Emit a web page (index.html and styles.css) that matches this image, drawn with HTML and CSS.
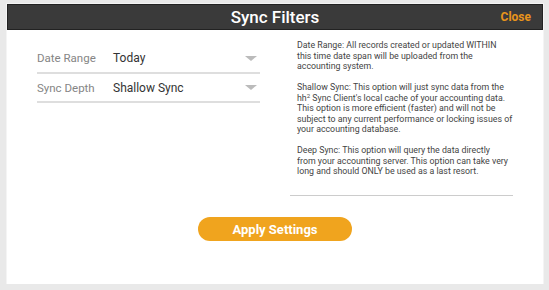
FILE: index.html
```html
<!DOCTYPE html>
<html lang="en">
<head>
    <meta charset="UTF-8">
    <meta name="viewport" content="width=device-width, initial-scale=1.0">
    <title>Sync Filters</title>
    <link rel="stylesheet" href="styles.css">
</head>
<body>
    <div class="modal">
        <div class="modal-header">
            <h1>Sync Filters</h1>
            <a href="#" class="close">Close</a>
        </div>
        <div class="modal-body">
            <div class="filters">
                <div class="form-row">
                    <label for="date-range">Date Range</label>
                    <div class="select" id="date-range">Today<span class="arrow"></span></div>
                </div>
                <div class="form-row">
                    <label for="sync-depth">Sync Depth</label>
                    <div class="select" id="sync-depth">Shallow Sync<span class="arrow"></span></div>
                </div>
            </div>
            <div class="help">
                <p>Date Range: All records created or updated WITHIN<br>this time date span will be uploaded from the<br>accounting system.</p>
                <p>Shallow Sync: This option will just sync data from the<br>hh<sup>2</sup> Sync Client's local cache of your accounting data.<br>This option is more efficient (faster) and will not be<br>subject to any current performance or locking issues of<br>your accounting database.</p>
                <p>Deep Sync: This option will query the data directly<br>from your accounting server. This option can take very<br>long and should ONLY be used as a last resort.</p>
            </div>
        </div>
        <div class="modal-footer">
            <button type="button" class="apply">Apply Settings</button>
        </div>
    </div>
</body>
</html>
```

FILE: styles.css
```css
body {
    margin: 0;
    padding: 4px 6px 0 7px;
    background-color: #e9e9e9;
    font-family: Roboto, "Liberation Sans", sans-serif;
}
.modal {
    height: 280px;
    background-color: #fff;
    box-shadow: 0 0 0 1px #f4f4f4;
    box-sizing: border-box;
}
.modal-header {
    position: relative;
    height: 26px;
    background-color: #3a3a3a;
    border: 1px solid #222;
    box-sizing: border-box;
    text-align: center;
}
.modal-header h1 {
    margin: 0;
    font-size: 17px;
    font-weight: 500;
    line-height: 24px;
    color: #fff;
}
.modal-header .close {
    position: absolute;
    right: 11px;
    top: 0;
    line-height: 24px;
    font-size: 12px;
    font-weight: 700;
    color: #e8941c;
    text-decoration: none;
}
.modal-body {
    display: flex;
    align-items: flex-start;
    padding: 10px 29px 0 30px;
    height: 156px;
}
.filters {
    width: 223px;
    padding-top: 4px;
}
.form-row {
    display: flex;
    align-items: center;
    height: 28px;
    border-bottom: 2px solid #dedede;
    font-size: 11.5px;
}
.form-row + .form-row {
    height: 27px;
}
.form-row label {
    width: 76px;
    color: #858585;
}
.select {
    flex: 1;
    display: flex;
    justify-content: space-between;
    align-items: center;
    color: #333;
    font-size: 12px;
}
.arrow {
    width: 0;
    height: 0;
    margin-right: 3px;
    border-left: 6px solid transparent;
    border-right: 6px solid transparent;
    border-top: 5px solid #bbb;
}
.help {
    width: 216px;
    height: 155px;
    margin-left: 30px;
    padding: 0 0 0 7px;
    border-bottom: 1px solid #ccc;
    font-size: 8.8px;
    line-height: 10.5px;
    color: #444;
    white-space: nowrap;
}
.help p {
    margin: 0 0 10.5px;
}
.help sup {
    font-size: 6px;
    line-height: 0;
    vertical-align: 3px;
}
.modal-footer {
    text-align: center;
    padding-top: 21px;
}
.apply {
    width: 154px;
    height: 24px;
    border: none;
    border-radius: 12px;
    background-color: #f0a41e;
    color: #fff;
    font-family: Roboto, "Liberation Sans", sans-serif;
    font-size: 13px;
    font-weight: 700;
    cursor: pointer;
}
```
